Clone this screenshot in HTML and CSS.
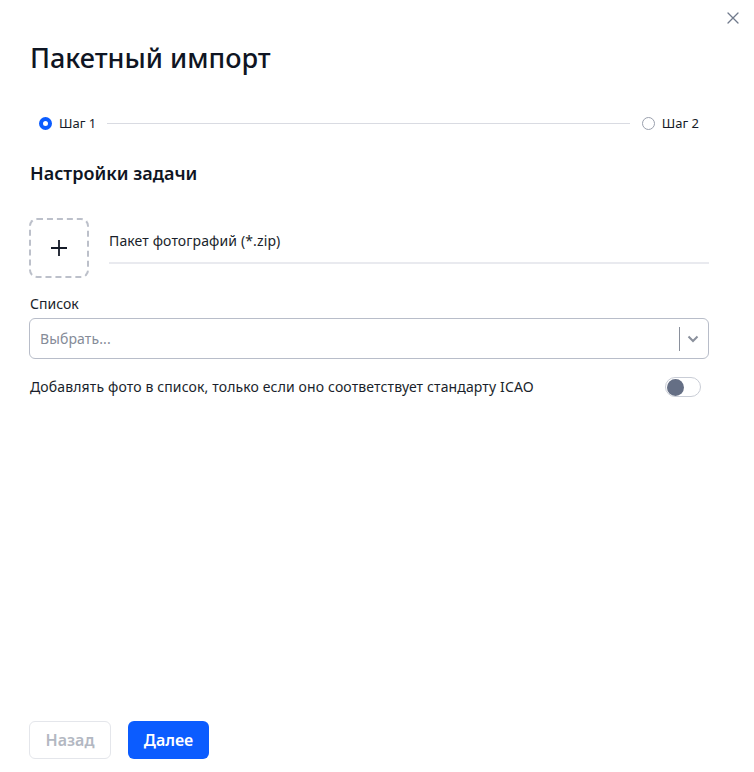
FILE: index.html
```html
<!DOCTYPE html>
<html lang="ru">
<head>
    <meta charset="UTF-8">
    <meta name="viewport" content="width=device-width, initial-scale=1.0">
    <title>Пакетный импорт</title>
    <link rel="stylesheet" href="styles.css">
</head>
<body>
<div class="modal">
    <button class="close-btn" aria-label="Закрыть">
        <svg width="12" height="12" viewBox="0 0 12 12"><path d="M1 1L11 11M11 1L1 11" stroke="#707a8c" stroke-width="1.3" fill="none" stroke-linecap="round"/></svg>
    </button>

    <h1 class="title">Пакетный импорт</h1>

    <div class="steps">
        <div class="step active">
            <span class="radio"></span>
            <span class="step-label">Шаг 1</span>
        </div>
        <div class="step-line"></div>
        <div class="step">
            <span class="radio"></span>
            <span class="step-label">Шаг 2</span>
        </div>
    </div>

    <h2 class="section-title">Настройки задачи</h2>

    <div class="upload-row">
        <div class="upload-box">
            <svg width="18" height="18" viewBox="0 0 18 18"><path d="M9 1V17M1 9H17" stroke="#151b28" stroke-width="1.8" fill="none"/></svg>
        </div>
        <div class="upload-field">Пакет фотографий (*.zip)</div>
    </div>

    <label class="field-label">Список</label>
    <div class="select">
        <span class="placeholder">Выбрать...</span>
        <span class="select-sep"></span>
        <svg class="chevron" width="12" height="8" viewBox="0 0 12 8"><path d="M1.5 1.5L6 6L10.5 1.5" stroke="#8a909c" stroke-width="2" fill="none"/></svg>
    </div>

    <div class="toggle-row">
        <span>Добавлять фото в список, только если оно соответствует стандарту ICAO</span>
        <span class="toggle"><span class="knob"></span></span>
    </div>

    <div class="footer">
        <button class="btn btn-back" disabled>Назад</button>
        <button class="btn btn-next">Далее</button>
    </div>
</div>
</body>
</html>
```

FILE: styles.css
```css
* {
    margin: 0;
    padding: 0;
    box-sizing: border-box;
}

body {
    background-color: #fff;
    font-family: "Noto Sans", "Open Sans", sans-serif;
    color: #1a1f2b;
}

.modal {
    position: relative;
    display: flex;
    flex-direction: column;
    height: 100vh;
    width: 709px;
    padding: 39px 0 13px 29px;
}

.close-btn {
    position: absolute;
    top: 12px;
    right: -30px;
    width: 12px;
    height: 12px;
    border: none;
    background: none;
    cursor: pointer;
    display: flex;
}

.title {
    font-size: 27px;
    line-height: 38px;
    font-weight: 500;
    color: #0f1523;
    padding-left: 1px;
}

.steps {
    display: flex;
    align-items: center;
    margin-top: 37px;
    height: 18px;
    padding: 0 10px;
}

.step {
    display: flex;
    align-items: center;
}

.radio {
    width: 13px;
    height: 13px;
    border-radius: 50%;
    border: 1.5px solid #9aa0ad;
    background-color: #fff;
}

.step.active .radio {
    border: 4px solid #0b5cff;
}

.step-label {
    font-size: 13px;
    line-height: 18px;
    margin-left: 7px;
    color: #151b28;
}

.step-line {
    flex: 1;
    height: 1px;
    background-color: #d9dbe2;
    margin: 0 12px 0 11px;
}

.section-title {
    font-size: 18px;
    line-height: 24px;
    font-weight: 600;
    color: #0f1523;
    margin-top: 29px;
    padding-left: 1px;
}

.upload-row {
    display: flex;
    align-items: flex-start;
    margin-top: 33px;
}

.upload-box {
    width: 60px;
    height: 60px;
    border: 2px dashed #bcc0ca;
    border-radius: 8px;
    display: flex;
    justify-content: center;
    align-items: center;
}

.upload-field {
    flex: 1;
    margin-left: 20px;
    margin-top: 4px;
    height: 42px;
    border-bottom: 2px solid #e9eaef;
    font-size: 14px;
    line-height: 38px;
    letter-spacing: 0.12px;
    color: #1a1f2b;
}

.field-label {
    font-size: 14px;
    line-height: 20px;
    margin-top: 16px;
    padding-left: 1px;
}

.select {
    display: flex;
    align-items: center;
    height: 41px;
    margin-top: 4px;
    border: 1px solid #b8bdc9;
    border-radius: 6px;
    padding: 0 9px 0 10px;
}

.placeholder {
    flex: 1;
    font-size: 14px;
    letter-spacing: 0.12px;
    color: #858b98;
}

.select-sep {
    width: 1px;
    height: 24px;
    background-color: #8a909c;
    margin-right: 7px;
}

.toggle-row {
    display: flex;
    align-items: center;
    justify-content: space-between;
    margin-top: 18px;
    font-size: 14px;
    line-height: 20px;
    letter-spacing: 0.13px;
    padding-left: 1px;
    padding-right: 8px;
}

.toggle {
    display: flex;
    align-items: center;
    width: 36px;
    height: 20px;
    border: 1px solid #c9cdd6;
    border-radius: 10px;
    padding: 0 1px;
}

.knob {
    width: 17px;
    height: 17px;
    border-radius: 50%;
    background-color: #656f85;
}

.footer {
    display: flex;
    gap: 17px;
    margin-top: auto;
}

.btn {
    height: 38px;
    width: 82px;
    border-radius: 6px;
    font-family: "Noto Sans", sans-serif;
    font-size: 16px;
    font-weight: 600;
    cursor: pointer;
}

.btn-back {
    background-color: #fff;
    border: 1px solid #e4e6eb;
    color: #b3b8c2;
}

.btn-next {
    width: 81px;
    background-color: #0b5cff;
    border: none;
    color: #fff;
}
```
